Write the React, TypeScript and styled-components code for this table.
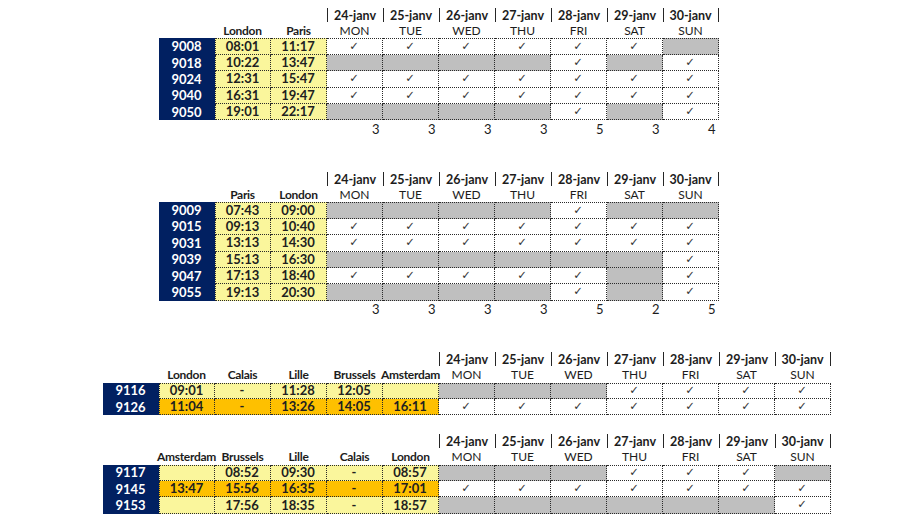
import styled, { createGlobalStyle } from "styled-components";

const GlobalStyle = createGlobalStyle`
  html, body {
    margin: 0;
    padding: 0;
    background: #ffffff;
  }
  body {
    font-family: Lato, "Liberation Sans", sans-serif;
    font-size: 12px;
    color: #1c1c1c;
    overflow: hidden;
  }
`;

const ROW = 16.4;
const COL = 56;

const DATES = ["24-janv", "25-janv", "26-janv", "27-janv", "28-janv", "29-janv", "30-janv"];
const DAYS = ["MON", "TUE", "WED", "THU", "FRI", "SAT", "SUN"];

type Train = {
  no: string;
  times: string[];
  // one char per weekday, "1" = runs, "0" = no service
  runs: string;
  hot?: boolean;
};

type Timetable = {
  stations: string[];
  trains: Train[];
  indent: number;
  gap: number;
  counts?: boolean;
};

const tables: Timetable[] = [
  {
    stations: ["London", "Paris"],
    indent: 1,
    gap: 0,
    counts: true,
    trains: [
      { no: "9008", times: ["08:01", "11:17"], runs: "1111110" },
      { no: "9018", times: ["10:22", "13:47"], runs: "0000101" },
      { no: "9024", times: ["12:31", "15:47"], runs: "1111111" },
      { no: "9040", times: ["16:31", "19:47"], runs: "1111111" },
      { no: "9050", times: ["19:01", "22:17"], runs: "0000101" },
    ],
  },
  {
    stations: ["Paris", "London"],
    indent: 1,
    gap: 2,
    counts: true,
    trains: [
      { no: "9009", times: ["07:43", "09:00"], runs: "0000100" },
      { no: "9015", times: ["09:13", "10:40"], runs: "1111111" },
      { no: "9031", times: ["13:13", "14:30"], runs: "1111111" },
      { no: "9039", times: ["15:13", "16:30"], runs: "0000001" },
      { no: "9047", times: ["17:13", "18:40"], runs: "1111101" },
      { no: "9055", times: ["19:13", "20:30"], runs: "0000101" },
    ],
  },
  {
    stations: ["London", "Calais", "Lille", "Brussels", "Amsterdam"],
    indent: 0,
    gap: 2,
    trains: [
      { no: "9116", times: ["09:01", "-", "11:28", "12:05", ""], runs: "0001111" },
      { no: "9126", times: ["11:04", "-", "13:26", "14:05", "16:11"], runs: "1111111", hot: true },
    ],
  },
  {
    stations: ["Amsterdam", "Brussels", "Lille", "Calais", "London"],
    indent: 0,
    gap: 1,
    trains: [
      { no: "9117", times: ["", "08:52", "09:30", "-", "08:57"], runs: "0001110" },
      { no: "9145", times: ["13:47", "15:56", "16:35", "-", "17:01"], runs: "1111111", hot: true },
      { no: "9153", times: ["", "17:56", "18:35", "-", "18:57"], runs: "0000001" },
    ],
  },
];

const Page = styled.main`
  padding: 5.7px 0 0 102.5px;
`;

const Sheet = styled.section<{ $cols: number; $indent: number; $gap: number }>`
  display: grid;
  grid-template-columns: repeat(${(p) => p.$cols}, ${COL}px);
  grid-auto-rows: ${ROW}px;
  margin-left: ${(p) => p.$indent * COL}px;
  margin-top: ${(p) => p.$gap * ROW}px;
`;

const Cell = styled.div`
  box-sizing: border-box;
  display: flex;
  align-items: center;
  justify-content: center;
  white-space: nowrap;
  line-height: 1;
`;

const Spacer = styled.div<{ $span: number }>`
  grid-column: span ${(p) => p.$span};
`;

const DateCell = styled(Cell)<{ $last?: boolean }>`
  font-weight: 700;
  font-size: 12.5px;
  padding-top: 2px;
  border-left: 1.5px solid #262626;
  border-right: ${(p) => (p.$last ? "1.5px solid #262626" : "none")};
  margin-top: 2px;
`;

const Head = styled(Cell)<{ $bold?: boolean }>`
  font-weight: ${(p) => (p.$bold ? 700 : 400)};
  font-size: 12px;
  letter-spacing: ${(p) => (p.$bold ? "-0.3px" : "0")};
  padding-top: 1px;
`;

const TrainNo = styled(Cell)`
  background: #012061;
  color: #ffffff;
  font-weight: 700;
  font-size: 13px;
`;

const dotted = "1px dotted #2a2a2a";

const Time = styled(Cell)<{ $hot?: boolean; $first?: boolean; $top?: boolean }>`
  background: ${(p) => (p.$hot ? "#fec000" : "#faf69c")};
  font-weight: 700;
  font-size: 13px;
  color: #202020;
  border-right: ${dotted};
  border-bottom: ${dotted};
  border-left: ${(p) => (p.$first ? dotted : "none")};
  border-top: ${(p) => (p.$top ? dotted : "none")};
`;

const Day = styled(Cell)<{ $off?: boolean; $top?: boolean }>`
  background: ${(p) => (p.$off ? "#bfbfbf" : "#ffffff")};
  border-right: ${dotted};
  border-bottom: ${dotted};
  border-top: ${(p) => (p.$top ? dotted : "none")};
  font-family: "DejaVu Sans", sans-serif;
  font-size: 11.5px;
  color: #3a3a3a;
`;

const Count = styled(Cell)`
  justify-content: flex-end;
  padding-right: 3px;
  padding-top: 2px;
  font-size: 13px;
`;

const Row = ({ train, top }: { train: Train; top: boolean }) => (
  <>
    <TrainNo>{train.no}</TrainNo>
    {train.times.map((t, i) => (
      <Time key={i} $hot={train.hot} $first={i === 0} $top={top}>
        {t}
      </Time>
    ))}
    {train.runs.split("").map((r, i) => (
      <Day key={i} $off={r === "0"} $top={top}>
        {r === "1" ? "✓" : ""}
      </Day>
    ))}
  </>
);

const Schedule = ({ table }: { table: Timetable }) => {
  const lead = 1 + table.stations.length;
  const cols = lead + DAYS.length;
  const totals = DAYS.map((_, d) => table.trains.filter((t) => t.runs[d] === "1").length);

  return (
    <Sheet $cols={cols} $indent={table.indent} $gap={table.gap}>
      <Spacer $span={lead} />
      {DATES.map((date, i) => (
        <DateCell key={date} $last={i === DATES.length - 1}>
          {date}
        </DateCell>
      ))}

      <Spacer $span={1} />
      {table.stations.map((s, i) => (
        <Head key={s + i} $bold>
          {s}
        </Head>
      ))}
      {DAYS.map((d) => (
        <Head key={d}>{d}</Head>
      ))}

      {table.trains.map((train, r) => (
        <Row key={train.no} train={train} top={r === 0} />
      ))}

      {table.counts && (
        <>
          <Spacer $span={lead} />
          {totals.map((n, i) => (
            <Count key={i}>{n}</Count>
          ))}
        </>
      )}
    </Sheet>
  );
};

export default function App() {
  return (
    <>
      <GlobalStyle />
      <Page>
        {tables.map((t, i) => (
          <Schedule key={i} table={t} />
        ))}
      </Page>
    </>
  );
}
